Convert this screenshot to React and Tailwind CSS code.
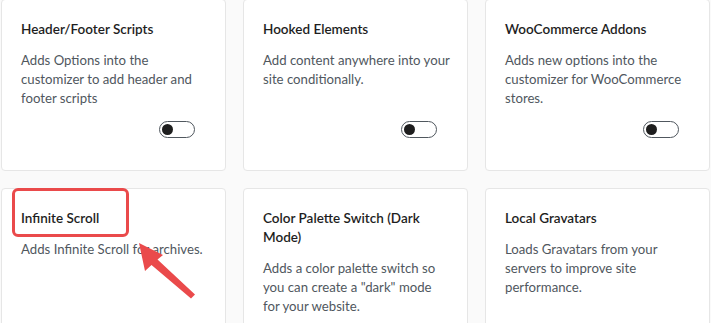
import React from "react";

const modules = [
  {
    title: "Header/Footer Scripts",
    desc: "Adds Options into the customizer to add header and footer scripts",
  },
  {
    title: "Hooked Elements",
    desc: "Add content anywhere into your site conditionally.",
  },
  {
    title: "WooCommerce Addons",
    desc: "Adds new options into the customizer for WooCommerce stores.",
  },
  {
    title: "Infinite Scroll",
    desc: "Adds Infinite Scroll for archives.",
    highlight: true,
  },
  {
    title: "Color Palette Switch (Dark Mode)",
    desc: 'Adds a color palette switch so you can create a "dark" mode for your website.',
  },
  {
    title: "Local Gravatars",
    desc: "Loads Gravatars from your servers to improve site performance.",
  },
];

function Toggle() {
  return (
    <div className="w-[36px] h-[17px] rounded-full border border-[#50575e] bg-white flex items-center px-[2px]">
      <span className="w-[11px] h-[11px] rounded-full bg-[#1e1e1e]" />
    </div>
  );
}

function Card({ m }) {
  return (
    <div className="relative bg-white border border-[#e6e6e6] rounded-[4px] pl-[19px] pr-[17px] pt-[20px] pb-[32px] flex flex-col">
      <h3 className="text-[13.5px] leading-[19px] font-semibold text-[#1e1e1e]">{m.title}</h3>
      <p className="mt-[12px] text-[13.2px] leading-[19px] text-[#50575e]">{m.desc}</p>
      <div className="mt-auto pt-[13px] flex justify-end pr-[13px]">
        <Toggle />
      </div>

      {m.highlight && (
        <>
          <div className="absolute left-[10px] top-[-1px] w-[117px] h-[49px] border-[3px] border-[#ea4a4b] rounded-[6px]" />
          <svg
            className="absolute left-[129px] top-[48px]"
            width="72"
            height="66"
            viewBox="0 0 72 66"
          >
            {/* arrow pointing up-left at the title, tapered tail */}
            <path d="M8 6 L14 34 L20.5 28 L60 61.5 L64 57.5 L26.5 22.5 L32 18 Z" fill="#ea4a4b" />
          </svg>
        </>
      )}
    </div>
  );
}

export default function App() {
  return (
    <div
      className="w-[711px] h-[323px] overflow-hidden bg-[#fafafa]"
      style={{ fontFamily: 'Lato, "Noto Sans", sans-serif' }}
    >
      <div className="grid grid-cols-[225px_225px_225px] gap-[17px] pl-[1px] mt-[-1px]">
        {modules.map((m) => (
          <Card key={m.title} m={m} />
        ))}
      </div>
    </div>
  );
}
